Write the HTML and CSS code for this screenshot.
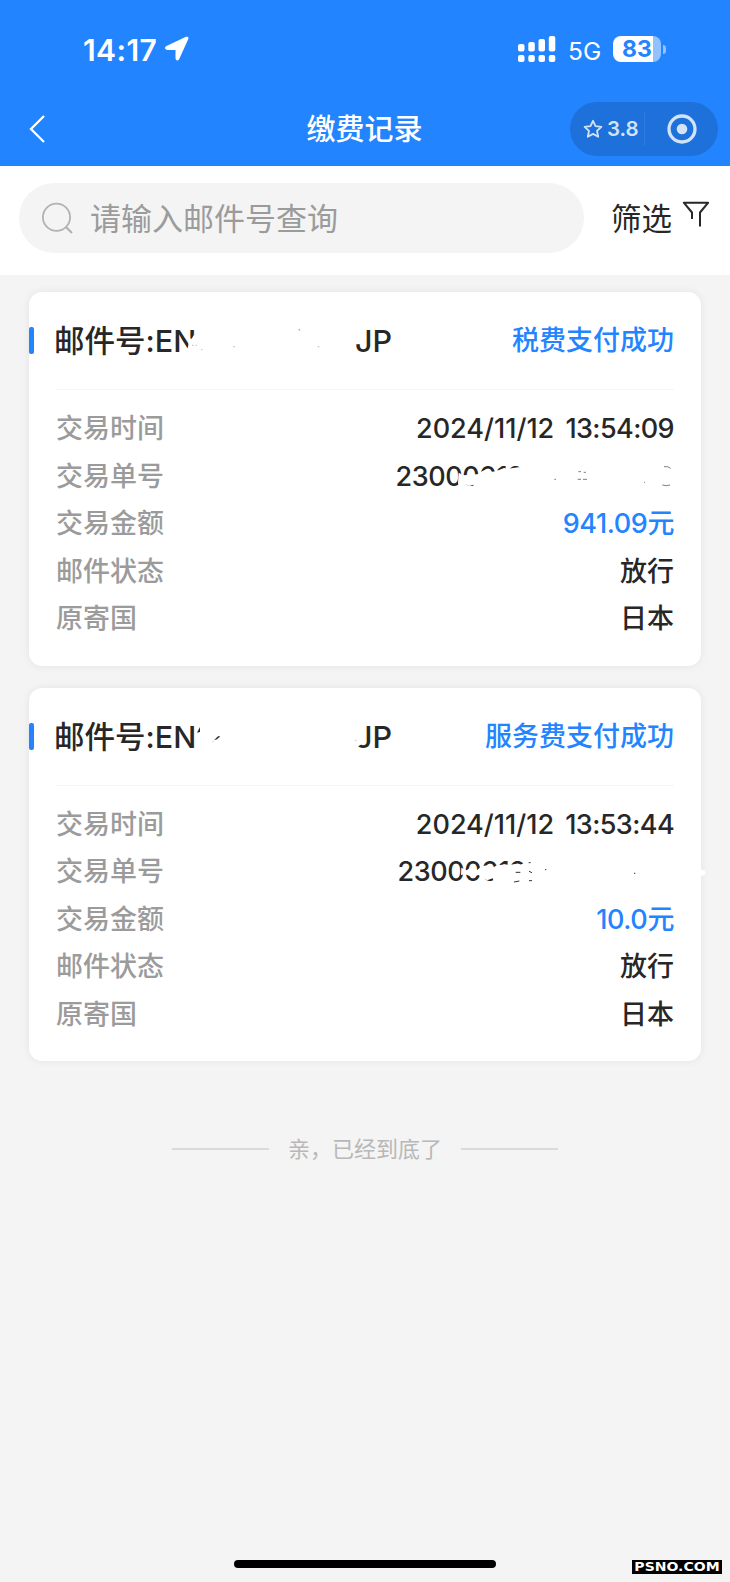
FILE: index.html
```html
<!DOCTYPE html>
<html lang="zh">
<head>
    <meta charset="UTF-8">
    <title>缴费记录</title>
    <link rel="stylesheet" href="styles.css">
</head>
<body>

<header class="header">
    <div class="status-bar">
        <span class="time">14:17</span>
        <svg class="location" width="26" height="26" viewBox="0 0 26 26"><path d="M2.500 10 22 .8Q25 0 24.300 3L15 23.500Q12.500 26 11.500 22.500V14H3Q-1 12.500 2.500 10Z" fill="#fff"/></svg>
        <svg class="signal" width="38" height="26" viewBox="0 0 38 26" fill="#fff">
            <rect x="0" y="8" width="6.500" height="7.500" rx="2"/><rect x="10.300" y="6" width="6.500" height="9.500" rx="2"/><rect x="20.500" y="3" width="6.500" height="12.500" rx="2"/><rect x="30.800" y="0" width="6.500" height="15.500" rx="2"/>
            <rect x="0" y="19" width="6.500" height="7" rx="2"/><rect x="10.300" y="19" width="6.500" height="7" rx="2"/><rect x="20.500" y="19" width="6.500" height="7" rx="2"/><rect x="30.800" y="19" width="6.500" height="7" rx="2"/>
        </svg>
        <span class="network">5G</span>
        <div class="battery">83</div>
        <div class="battery-tip"></div>
    </div>
    <div class="nav-bar">
        <svg class="back" width="17" height="30" viewBox="0 0 17 30"><path d="M16 2 3 15l13 13" fill="none" stroke="#fff" stroke-width="2.300"/></svg>
        <h1>缴费记录</h1>
        <div class="capsule">
            <svg class="star" width="20" height="20" viewBox="0 0 20 20"><path d="M10 1.800 12.500 7.200 18.400 7.900 14 11.900 15.200 17.800 10 14.900 4.800 17.800 6 11.900 1.600 7.900 7.500 7.200Z" fill="none" stroke="#d2e3f8" stroke-width="1.800" stroke-linejoin="round"/></svg>
            <span class="score">3.8</span>
            <svg class="target" width="30" height="30" viewBox="0 0 30 30"><circle cx="15" cy="15" r="13" fill="none" stroke="#d2e3f8" stroke-width="3.300"/><circle cx="15" cy="15" r="5.300" fill="#d2e3f8"/></svg>
        </div>
    </div>
</header>

<div class="search-bar">
    <div class="search-input">
        <svg width="32" height="32" viewBox="0 0 32 32" fill="none" stroke="#b2b2b2" stroke-width="1.800"><circle cx="14.500" cy="15.200" r="13.600"/><path d="m24 25 6 6" stroke-width="2.200"/></svg>
        <span>请输入邮件号查询</span>
    </div>
    <span class="filter">筛选</span>
    <svg class="funnel" width="27" height="27" viewBox="0 0 27 27"><path d="M10 19V12.500L1.800 2.700H26.200L18 12.500V26.500" fill="none" stroke="#272727" stroke-width="2" stroke-linejoin="round"/></svg>
</div>

<main class="list">
    <section class="card">
        <div class="card-head">
            <div class="mail-no">
                <span class="prefix">邮件号:EN</span><span>JP</span>
                <svg class="erase" width="340" height="97" viewBox="165 381 1020 291">
                    <path d="M552 575 567 546 571 520 578 521 584 511 592 515V575Z" fill="#fff"/>
                    <path d="M579 541h5M590 541h4M606 554h4M703 545h5M898 493h4v5M956 545h5" fill="none" stroke="#999" stroke-width="2"/>
                </svg>
            </div>
            <span class="pay-state">税费支付成功</span>
        </div>
        <div class="row"><span class="label">交易时间</span><span class="value">2024/11/12 <span class="clock">13:54:09</span></span></div>
        <div class="row">
            <span class="label">交易单号</span>
            <span class="value order-no order-tax">23000012
                <svg class="erase" width="277" height="47.500" viewBox="93 261 831 142.500">
                    <path d="M278 320 292 328 334 325 344 318 362 309 378 317 390 316 414 306 425 308 457 304 500 300V372H326L323 356 310 360 298 354 280 372 276 350Z" fill="#fff"/>
                    <path d="M565 340h5M637 317h8M653 319h7M635 340h10M651 340h12M834 349h3M889 357q12 4 23 0M894 302q13-2 20 5" fill="none" stroke="#666" stroke-width="2.500"/>
                </svg>
            </span>
        </div>
        <div class="row"><span class="label">交易金额</span><span class="value amount">941.09元</span></div>
        <div class="row"><span class="label">邮件状态</span><span class="value">放行</span></div>
        <div class="row"><span class="label">原寄国</span><span class="value">日本</span></div>
    </section>

    <section class="card">
        <div class="card-head">
            <div class="mail-no">
                <span class="prefix">邮件号:EN</span><span>JP</span>
                <svg class="erase" width="340" height="97" viewBox="165 51 1020 291">
                    <path d="M594 185 603 168V183Z" fill="#272727"/>
                    <path d="M645 208 657 196H664L654 205Z" fill="#272727"/>
                    <path d="M1066 200H1088V220L1074 228H1066Z" fill="#fff"/>
                    <path d="M1068 208h4M641 212h3" stroke="#999" stroke-width="2"/>
                </svg>
            </div>
            <span class="pay-state">服务费支付成功</span>
        </div>
        <div class="row"><span class="label">交易时间</span><span class="value">2024/11/12 <span class="clock">13:53:44</span></span></div>
        <div class="row">
            <span class="label">交易单号</span>
            <span class="value order-no order-service">23000012
                <svg class="erase" width="275" height="47.500" viewBox="99 531 825 142.500">
                    <path d="M286 590 302 598 318 586 333 598 346 586 364 583 384 588 390 584 416 580 432 582 446 579 458 582 500 570V645H388L380 622 364 628 348 620 338 612 318 617 297 610 285 612Z" fill="#fff"/>
                    <path d="M449 604h14M444 633l16-3M489 601l9 4M489 629h9M488 575h6M537 596h4M804 607h4" fill="none" stroke="#333" stroke-width="3"/>
                    <circle cx="1009" cy="605" r="9" fill="#fff"/>
                </svg>
            </span>
        </div>
        <div class="row"><span class="label">交易金额</span><span class="value amount">10.0元</span></div>
        <div class="row"><span class="label">邮件状态</span><span class="value">放行</span></div>
        <div class="row"><span class="label">原寄国</span><span class="value">日本</span></div>
    </section>

    <div class="list-end">亲，已经到底了</div>
</main>

<div class="home-indicator"></div>
<div class="watermark"><span>PSNO.COM</span></div>

</body>
</html>
```
FILE: styles.css
```css
* { box-sizing: border-box; }
body { margin: 0; height: 1582px; position: relative; overflow: hidden; background: #f4f4f4; color: #272727; font-family: Inter, "Noto Sans CJK SC", sans-serif; }
svg { display: block; flex: none; }
span, h1 { white-space: nowrap; }

/* 顶部 */
.header { height: 166px; background: #2384ff; color: #fff; }
.status-bar { display: flex; align-items: center; height: 98px; padding: 0 64px 0 83px; }
.time { width: 80px; padding-top: 1px; font-size: 30px; font-weight: 600; letter-spacing: 0.4px; line-height: 36px; }
.location { margin-left: 1px; }
.signal { margin-left: auto; }
.network { width: 45px; margin-left: 12px; font-size: 24.5px; line-height: 30px; padding-top: 3px; }
.battery { width: 48px; height: 26px; border-radius: 8px; background: linear-gradient(to right, #fff 40px, #91c1ff 40px); color: #2384ff; font-size: 23px; font-weight: 700; line-height: 26px; text-align: center; }
.battery-tip { width: 3px; height: 9px; margin-left: 2px; border-radius: 0 4px 4px 0; background: #91c1ff; }
.nav-bar { display: grid; grid-template-columns: 1fr auto 1fr; align-items: center; height: 62px; padding: 0 12px 0 28px; }
.nav-bar h1 { margin: 2px 0 0 -17px; font-size: 29px; font-weight: 500; line-height: 40px; }
.capsule { display: flex; align-items: center; justify-self: end; width: 148px; height: 54px; padding-left: 13px; border-radius: 27px; background: #1e70da; color: #d2e3f8; }
.score { width: 42px; padding-left: 4px; font-size: 20.5px; font-weight: 600; line-height: 34px; border-right: 1px solid #2f7cdf; }
.target { margin-left: 22px; }

/* 搜索 */
.search-bar { display: flex; align-items: flex-start; height: 109px; padding: 17px 20px 0 19px; background: #fff; }
.search-input { display: flex; align-items: center; width: 565px; height: 70px; padding-left: 23px; border-radius: 35px; background: #f4f4f4; color: #9b9b9b; font-size: 31px; }
.search-input span { margin-left: 16px; padding-top: 2px; line-height: 44px; }
.filter { margin-left: 27px; font-size: 30.5px; line-height: 72px; }
.funnel { margin: 17px 0 0 10px; }

/* 记录卡片 */
.list { padding: 17px 29px 0; }
.card { height: 373.500px; margin-bottom: 22px; padding: 0 27px; border-radius: 13px; background: #fff; box-shadow: 0 0 9px rgba(0, 0, 0, .07); }
.card-head { position: relative; display: flex; justify-content: space-between; align-items: center; height: 98px; margin-bottom: 15px; border-bottom: 1.500px solid #f5f5f5; }
.card-head::before { content: ""; position: absolute; left: -27px; top: 35px; width: 5px; height: 27px; border-radius: 2px; background: #2384ff; }
.mail-no { position: relative; display: flex; margin-left: -2px; font-size: 30.5px; font-weight: 500; line-height: 97px; }
.prefix { width: 301px; }
.erase { position: absolute; left: 0; top: 0; overflow: visible; }
.pay-state { padding-top: 1px; color: #2384ff; font-size: 27px; font-weight: 500; line-height: 40px; }
.row { display: flex; justify-content: space-between; height: 47.500px; font-size: 27px; font-weight: 500; line-height: 48.500px; }
.label { color: #9b9b9b; }
.clock { margin-left: 4px; letter-spacing: -0.6px; }
.amount { color: #2384ff; letter-spacing: -0.4px; }
.order-no { position: relative; letter-spacing: -0.4px; text-indent: -1.5px; }
.order-tax { width: 277px; }
.order-service { width: 275px; }

/* 到底提示 */
.list-end { display: flex; align-items: center; justify-content: center; gap: 19px; margin-top: 72px; color: #b8b8b8; font-size: 22px; line-height: 32px; }
.list-end::before, .list-end::after { content: ""; width: 97px; height: 2px; background: #dadada; }

.home-indicator { position: absolute; left: 234px; bottom: 14px; width: 262px; height: 8px; border-radius: 4px; background: #000; }
.watermark { position: absolute; right: 8px; bottom: 8px; width: 90px; height: 14px; background: #000; color: #fff; font: bold 12px/14px "DejaVu Sans", sans-serif; }
.watermark span { display: inline-block; transform: scaleX(1.17); transform-origin: 0 0; padding-left: 2px; }
```
